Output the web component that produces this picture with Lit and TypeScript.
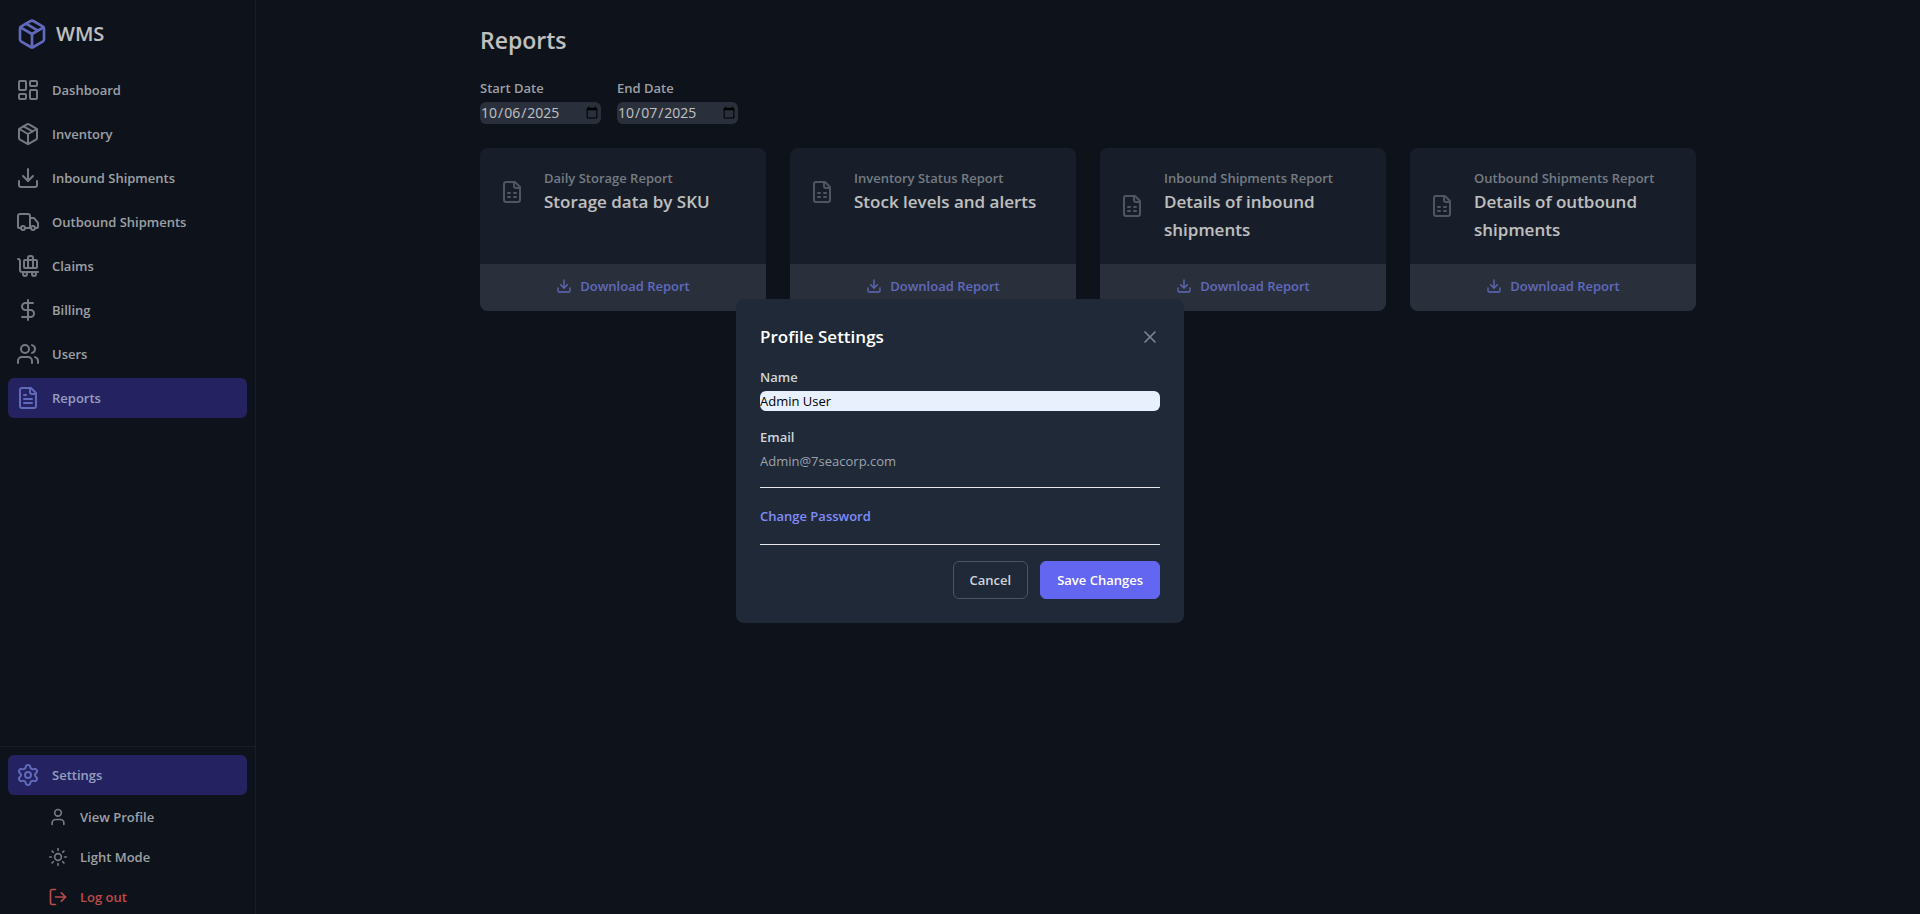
import { LitElement, html, css, svg, SVGTemplateResult } from "lit";
import { customElement, property } from "lit/decorators.js";

const icons: Record<string, SVGTemplateResult> = {
  package: svg`<path d="M11 21.73a2 2 0 0 0 2 0l7-4A2 2 0 0 0 21 16V8a2 2 0 0 0-1-1.73l-7-4a2 2 0 0 0-2 0l-7 4A2 2 0 0 0 3 8v8a2 2 0 0 0 1 1.73z"/><path d="M12 22V12"/><path d="M3.29 7 12 12l8.71-5"/><path d="m7.5 4.27 9 5.15"/>`,
  dashboard: svg`<rect width="7" height="9" x="3" y="3" rx="1"/><rect width="7" height="5" x="14" y="3" rx="1"/><rect width="7" height="9" x="14" y="12" rx="1"/><rect width="7" height="5" x="3" y="16" rx="1"/>`,
  download: svg`<path d="M21 15v4a2 2 0 0 1-2 2H5a2 2 0 0 1-2-2v-4"/><path d="m7 10 5 5 5-5"/><path d="M12 15V3"/>`,
  truck: svg`<path d="M14 18V6a2 2 0 0 0-2-2H4a2 2 0 0 0-2 2v11a1 1 0 0 0 1 1h2"/><path d="M15 18H9"/><path d="M19 18h2a1 1 0 0 0 1-1v-3.65a1 1 0 0 0-.22-.624l-3.48-4.35A1 1 0 0 0 17.52 8H14"/><circle cx="17" cy="18" r="2"/><circle cx="7" cy="18" r="2"/>`,
  claims: svg`<path d="M22 18H6a2 2 0 0 1-2-2V7a2 2 0 0 0-2-2"/><path d="M17 14V4a2 2 0 0 0-2-2h-1a2 2 0 0 0-2 2v10"/><rect width="13" height="8" x="8" y="6" rx="1"/><circle cx="18" cy="20" r="2"/><circle cx="9" cy="20" r="2"/>`,
  dollar: svg`<path d="M12 2v20"/><path d="M17 5H9.5a3.5 3.5 0 0 0 0 7h5a3.5 3.5 0 0 1 0 7H6"/>`,
  users: svg`<path d="M16 21v-2a4 4 0 0 0-4-4H6a4 4 0 0 0-4 4v2"/><circle cx="9" cy="7" r="4"/><path d="M22 21v-2a4 4 0 0 0-3-3.87"/><path d="M16 3.13a4 4 0 0 1 0 7.75"/>`,
  file: svg`<path d="M15 2H6a2 2 0 0 0-2 2v16a2 2 0 0 0 2 2h12a2 2 0 0 0 2-2V7Z"/><path d="M14 2v4a2 2 0 0 0 2 2h4"/><path d="M10 9H8"/><path d="M16 13H8"/><path d="M16 17H8"/>`,
  sheet: svg`<path d="M15 2H6a2 2 0 0 0-2 2v16a2 2 0 0 0 2 2h12a2 2 0 0 0 2-2V7Z"/><path d="M14 2v4a2 2 0 0 0 2 2h4"/><path d="M8 13h2"/><path d="M14 13h2"/><path d="M8 17h2"/><path d="M14 17h2"/>`,
  settings: svg`<path d="M9.671 4.136a2.34 2.34 0 0 1 4.659 0 2.34 2.34 0 0 0 3.319 1.915 2.34 2.34 0 0 1 2.33 4.033 2.34 2.34 0 0 0 0 3.831 2.34 2.34 0 0 1-2.33 4.033 2.34 2.34 0 0 0-3.319 1.915 2.34 2.34 0 0 1-4.659 0 2.34 2.34 0 0 0-3.32-1.915 2.34 2.34 0 0 1-2.33-4.033 2.34 2.34 0 0 0 0-3.831A2.34 2.34 0 0 1 6.35 6.051a2.34 2.34 0 0 0 3.319-1.915"/><circle cx="12" cy="12" r="3"/>`,
  user: svg`<path d="M19 21v-2a4 4 0 0 0-4-4H9a4 4 0 0 0-4 4v2"/><circle cx="12" cy="7" r="4"/>`,
  sun: svg`<circle cx="12" cy="12" r="4"/><path d="M12 2v2"/><path d="M12 20v2"/><path d="m4.93 4.93 1.41 1.41"/><path d="m17.66 17.66 1.41 1.41"/><path d="M2 12h2"/><path d="M20 12h2"/><path d="m6.34 17.66-1.41 1.41"/><path d="m19.07 4.93-1.41 1.41"/>`,
  logout: svg`<path d="M9 21H5a2 2 0 0 1-2-2V5a2 2 0 0 1 2-2h4"/><path d="m16 17 5-5-5-5"/><path d="M21 12H9"/>`,
  close: svg`<path d="M18 6 6 18"/><path d="m6 6 12 12"/>`,
};

@customElement("wms-icon")
class WmsIcon extends LitElement {
  @property() name = "";
  static styles = css`
    :host { display: block; flex: none; width: 24px; height: 24px; }
    svg { display: block; width: 100%; height: 100%; }
  `;
  render() {
    return html`<svg viewBox="0 0 24 24" fill="none" stroke="currentColor" stroke-width="2"
      stroke-linecap="round" stroke-linejoin="round" aria-hidden="true">${icons[this.name]}</svg>`;
  }
}

const reset = css`
  :host, * { box-sizing: border-box; }
  * { margin: 0; }
  button, input { font: inherit; color: inherit; border: 0; padding: 0; background: none; }
  button { cursor: pointer; }
  a { color: inherit; text-decoration: none; }
`;

@customElement("wms-sidebar")
class WmsSidebar extends LitElement {
  static styles = [reset, css`
    :host { display: flex; flex-direction: column; width: 256px; flex: none; border-right: 1px solid #1f2937; }
    .brand { display: flex; align-items: center; gap: 8px; height: 68px; padding: 0 16px; font-size: 20px; line-height: 28px; font-weight: 600; color: #fff; }
    .brand wms-icon { width: 32px; height: 32px; color: #818cf8; }
    .nav { flex: 1; display: flex; flex-direction: column; gap: 4px; padding: 2px 8px 8px; }
    .item { display: flex; align-items: center; gap: 12px; width: 100%; height: 40px; padding: 0 8px; border-radius: 6px; text-align: left; }
    .item wms-icon { color: #9ca3af; }
    .item.active { background: #312e81; color: #c7d2fe; }
    .item.active wms-icon { color: #818cf8; }
    .footer { border-top: 1px solid #1f2937; padding: 8px 8px 0; margin-bottom: -1px; display: flex; flex-direction: column; gap: 4px; }
    .sub { display: flex; flex-direction: column; gap: 4px; padding-left: 32px; }
    .sub .item { height: 36px; }
    .sub wms-icon { width: 20px; height: 20px; }
    .item.danger, .item.danger wms-icon { color: #f86464; }
  `];
  private items = [
    ["dashboard", "Dashboard"], ["package", "Inventory"], ["download", "Inbound Shipments"],
    ["truck", "Outbound Shipments"], ["claims", "Claims"], ["dollar", "Billing"],
    ["users", "Users"], ["file", "Reports"],
  ];
  render() {
    return html`
      <div class="brand"><wms-icon name="package"></wms-icon><span>WMS</span></div>
      <nav class="nav">
        ${this.items.map(([icon, label]) => html`
          <a href="#" class="item ${label === "Reports" ? "active" : ""}"><wms-icon name=${icon}></wms-icon>${label}</a>`)}
      </nav>
      <div class="footer">
        <button class="item active"><wms-icon name="settings"></wms-icon>Settings</button>
        <div class="sub">
          <button class="item"><wms-icon name="user"></wms-icon>View Profile</button>
          <button class="item"><wms-icon name="sun"></wms-icon>Light Mode</button>
          <button class="item danger"><wms-icon name="logout"></wms-icon>Log out</button>
        </div>
      </div>`;
  }
}

@customElement("wms-reports")
class WmsReports extends LitElement {
  static styles = [reset, css`
    :host { display: block; flex: 1; min-width: 0; padding: 24px 32px; }
    .container { max-width: 1216px; margin: 0 auto; }
    h1 { font-size: 23px; line-height: 32px; font-weight: 600; color: #fff; }
    .filters { display: flex; gap: 16px; margin: 22px 0 24px; }
    .field { display: flex; flex-direction: column; gap: 4px; }
    .field input { width: 121px; height: 22px; border-radius: 6px; background: #374151; color: #fff; font-size: 14px; font-weight: 400; }
    .cards { display: grid; grid-template-columns: repeat(4, minmax(0, 1fr)); gap: 24px; }
    .card { display: flex; flex-direction: column; border-radius: 8px; overflow: hidden; background: #1f2937; }
    .body { flex: 1; padding: 20px; }
    .summary { display: flex; align-items: center; gap: 20px; }
    .summary wms-icon { color: #6b7280; }
    .kind { color: #9ca3af; white-space: nowrap; }
    h2 { font-size: 17px; line-height: 28px; font-weight: 600; color: #fff; }
    .action { display: flex; align-items: center; justify-content: center; gap: 8px; height: 47px; padding-bottom: 4px; background: #374151; color: #818cf8; }
    .action wms-icon { width: 16px; height: 16px; }
  `];
  private reports = [
    ["Daily Storage Report", "Storage data by SKU"],
    ["Inventory Status Report", "Stock levels and alerts"],
    ["Inbound Shipments Report", "Details of inbound shipments"],
    ["Outbound Shipments Report", "Details of outbound shipments"],
  ];
  render() {
    return html`<div class="container">
      <h1>Reports</h1>
      <div class="filters">
        <div class="field"><label for="start">Start Date</label><input id="start" type="date" value="2025-10-06"></div>
        <div class="field"><label for="end">End Date</label><input id="end" type="date" value="2025-10-07"></div>
      </div>
      <div class="cards">
        ${this.reports.map(([kind, title]) => html`
          <article class="card">
            <div class="body"><div class="summary">
              <wms-icon name="sheet"></wms-icon>
              <div><p class="kind">${kind}</p><h2>${title}</h2></div>
            </div></div>
            <button class="action"><wms-icon name="download"></wms-icon>Download Report</button>
          </article>`)}
      </div>
    </div>`;
  }
}

@customElement("wms-profile-dialog")
class WmsProfileDialog extends LitElement {
  static styles = [reset, css`
    :host { position: fixed; inset: 0; display: flex; align-items: center; justify-content: center; padding: 8px 16px 0; background: rgba(0, 0, 0, 0.25); }
    .panel { width: 100%; max-width: 448px; padding: 24px; border-radius: 8px; background: #1f2937; display: flex; flex-direction: column; gap: 16px; }
    .head { display: flex; align-items: center; justify-content: space-between; }
    h2 { font-size: 17px; line-height: 28px; font-weight: 600; color: #fff; }
    .close { color: #7d8592; }
    .close wms-icon { width: 20px; height: 20px; }
    .field { display: flex; flex-direction: column; gap: 4px; }
    .field input { width: 100%; height: 20px; border-radius: 6px; font-size: 13px; font-weight: 400; background: #e8f0fe; color: #000; }
    .field input:disabled { background: transparent; color: #9ca3af; }
    .row { border-top: 1px solid #e5e7eb; padding-top: 16px; }
    .link { display: block; line-height: 24px; color: #818cf8; }
    .actions { display: flex; justify-content: flex-end; gap: 12px; }
    .btn { height: 38px; padding: 0 16px; border: 1px solid #4b5563; border-radius: 6px; }
    .btn.primary { border-color: #6366f1; background: #6366f1; color: #fff; }
  `];
  render() {
    return html`<section class="panel" role="dialog" aria-labelledby="title">
      <div class="head"><h2 id="title">Profile Settings</h2>
        <button class="close" aria-label="Close"><wms-icon name="close"></wms-icon></button></div>
      <div class="field"><label for="name">Name</label><input id="name" type="text" value="Admin User"></div>
      <div class="field"><label for="email">Email</label><input id="email" type="email" value="Admin@7seacorp.com" disabled></div>
      <div class="row"><button class="link">Change Password</button></div>
      <div class="row actions"><button class="btn">Cancel</button><button class="btn primary">Save Changes</button></div>
    </section>`;
  }
}

@customElement("app-root")
class AppRoot extends LitElement {
  static styles = css`
    :host { display: flex; height: 100vh; overflow: hidden; background: #121925; color: #d1d5db;
      font: 600 13px/20px "Segoe UI", "Open Sans", "Noto Sans", sans-serif; }
  `;
  render() {
    return html`<wms-sidebar></wms-sidebar><wms-reports></wms-reports><wms-profile-dialog></wms-profile-dialog>`;
  }
}
